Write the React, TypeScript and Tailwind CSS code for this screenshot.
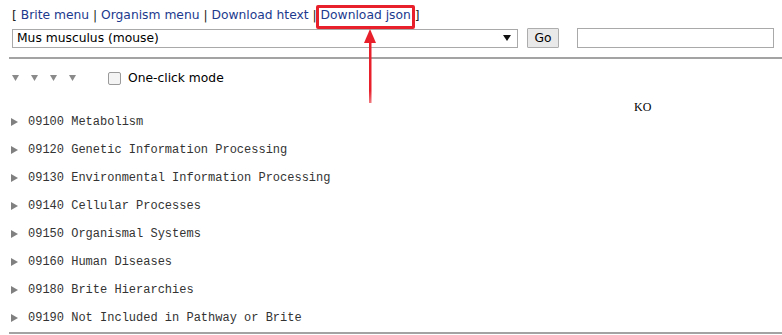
import type { ReactNode } from "react";

const VERDANA = "font-['DejaVu_Sans','Verdana',sans-serif]";
const MONO = "font-['Liberation_Mono','Courier_New',monospace]";

const items = [
  ["09100", "Metabolism"],
  ["09120", "Genetic Information Processing"],
  ["09130", "Environmental Information Processing"],
  ["09140", "Cellular Processes"],
  ["09150", "Organismal Systems"],
  ["09160", "Human Diseases"],
  ["09180", "Brite Hierarchies"],
  ["09190", "Not Included in Pathway or Brite"],
];

function Link({ children }: { children: ReactNode }) {
  return <a className="text-[#1c3a8e] no-underline">{children}</a>;
}

function DownTri() {
  return (
    <svg width="7" height="6" viewBox="0 0 7 6" aria-hidden="true">
      <path d="M0 0 L7 0 L3.5 6 Z" fill="#8a8a8a" />
    </svg>
  );
}

function RightTri() {
  return (
    <svg width="7" height="8" viewBox="0 0 7 8" aria-hidden="true">
      <path d="M0 0 L7 4 L0 8 Z" fill="#808080" />
    </svg>
  );
}

export default function App() {
  return (
    <div className={`relative h-[335px] w-[782px] overflow-hidden bg-white ${VERDANA}`}>
      <div className="pl-3 pt-[6px] text-[12.3px] leading-[18px] text-[#222]">
        [ <Link>Brite menu</Link> | <Link>Organism menu</Link> |{" "}
        <Link>Download htext</Link> | <Link>Download json</Link> ]
      </div>

      <div className="mt-[4px] flex h-[20px] items-center pl-3">
        <div className="flex h-[19px] w-[506px] items-center justify-between border border-[#a9a9a9] pl-[4px] pr-[6px] text-[12.3px] text-black">
          <span>Mus musculus (mouse)</span>
          <svg width="8" height="6" viewBox="0 0 8 6" aria-hidden="true">
            <path d="M0 0 L8 0 L4 6 Z" fill="#111" />
          </svg>
        </div>
        <button className="ml-[9px] flex h-[20px] w-[32px] items-center justify-center rounded-[1px] border border-[#adadad] bg-[#e9e9e9] text-[12.3px] text-black">
          Go
        </button>
        <div className="ml-[18px] h-[20px] w-[197px] border border-[#a9a9a9]" />
      </div>

      <div className="ml-[9px] mt-[9px] border-t-2 border-[#a3a3a3]" />

      <div className="mt-[11px] flex h-[16px] items-center pl-3">
        <div className="flex gap-[12px]">
          <DownTri />
          <DownTri />
          <DownTri />
          <DownTri />
        </div>
        <div className="ml-[32px] h-[13px] w-[13px] rounded-[2px] border border-[#9a9a9a] bg-[#f4f4f4]" />
        <span className="ml-[7px] text-[12.3px] text-black">One-click mode</span>
      </div>

      <div className="mt-[14px] h-[14px] pl-[634px] font-['Liberation_Serif',serif] text-[12px] leading-[14px] text-black">
        KO
      </div>

      <div className="-mt-[6px]">
        {items.map(([code, name]) => (
          <div key={code} className="flex h-[28px] items-center pl-[11px]">
            <RightTri />
            <span className={`ml-[10px] text-[12px] text-[#333] ${MONO}`}>
              {code} {name}
            </span>
          </div>
        ))}
      </div>

      <div className="ml-[9px] border-t-2 border-[#a3a3a3]" />

      {/* annotation overlay */}
      <div className="absolute left-[316px] top-[5px] h-[24px] w-[99px] rounded-[2px] border-[3px] border-[#e8202c]" />
      <svg
        className="absolute left-[362px] top-[29px]"
        width="16"
        height="76"
        viewBox="0 0 16 76"
        aria-hidden="true"
      >
        <defs>
          <linearGradient id="shaft" x1="0" y1="0" x2="0" y2="1">
            <stop offset="0" stopColor="#e8202c" />
            <stop offset="0.8" stopColor="#e8202c" />
            <stop offset="1" stopColor="#f07a80" />
          </linearGradient>
        </defs>
        <path d="M8 0 L14 14 L2 14 Z" fill="#e8202c" />
        <rect x="7" y="12" width="2.5" height="62" fill="url(#shaft)" />
      </svg>
    </div>
  );
}
